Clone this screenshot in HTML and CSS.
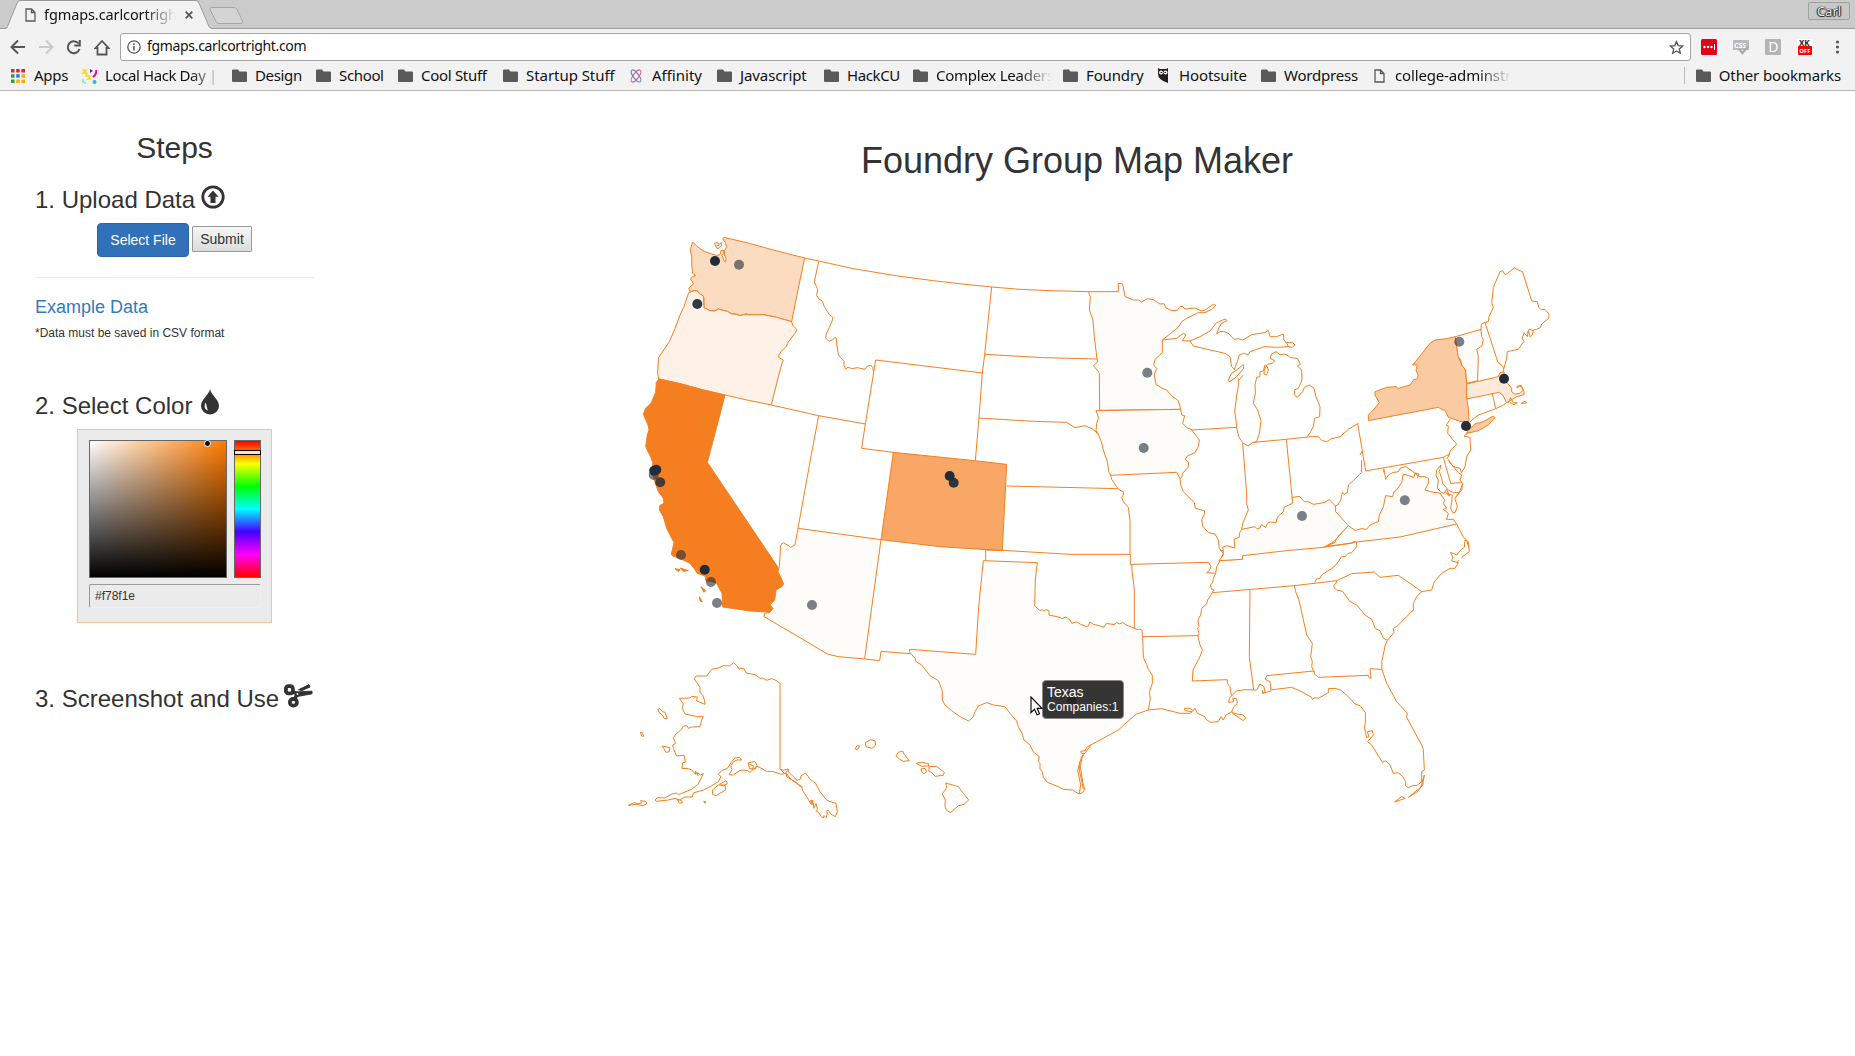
FILE: index.html
```html
<!DOCTYPE html>
<html lang="en">
<head>
<meta charset="utf-8">
<title>fgmaps.carlcortright.com</title>
<link rel="stylesheet" href="styles.css">
</head>
<body>
<svg class="defs" width="0" height="0">
  <symbol id="folder" viewBox="0 0 15 13"><path fill="#5a5a5a" d="M0 1.5Q0 .5 1 .5H6L7.5 2.5H14Q15 2.5 15 3.5V12Q15 13 14 13H1Q0 13 0 12Z"/></symbol>
  <symbol id="page" viewBox="0 0 11 14"><path fill="none" stroke="#5a5a5a" stroke-width="1.3" d="M1 1H6.5L10 4.5V13H1ZM6.5 1V4.5H10"/></symbol>
</svg>
<header class="browser">
  <div class="tabstrip">
    <svg class="tabs" width="260" height="29" viewBox="0 0 260 29">
      <path d="M0 28.5H5.5Q7 28.5 7.500 26.500L17 3Q18 .5 20 .5H196Q198 .5 199 3L209 26.500Q210 28.500 212 28.500H260V29H0Z" fill="#f2f2f2"/>
      <path d="M0 28.500H5Q7 28.500 7.500 26.500L17 3Q18 .5 20 .5H196Q198 .5 199 3L209 26.500Q210 28.500 212 28.500H260" fill="none" stroke="#999"/>
      <path d="M211.500 7.500H234Q236 7.500 237 9.500L242.500 21Q243 23.500 241 23.500H219Q217 23.500 216 21.500L210 9.500Q209.500 7.500 211.500 7.500Z" fill="#d4d4d4" stroke="#a5a5a5"/>
    </svg>
    <div class="tab"><svg class="doc" width="11" height="14"><use href="#page"/></svg><span class="tab-title fade">fgmaps.carlcortrigh</span>
      <svg class="close" width="8" height="8" viewBox="0 0 8 8"><path d="M.7.7 7.300 7.300M7.300.7.7 7.300" stroke="#555" stroke-width="1.7"/></svg></div>
    <span class="user">Carl</span>
  </div>
  <div class="toolbar">
    <svg class="nav" width="94" height="28" viewBox="0 0 94 28" fill="none" stroke="#555" stroke-width="2">
      <path d="M25 14H12M18 7.500 11.500 14 18 20.500"/>
      <path d="M39 14H52M46 7.500 52.500 14 46 20.500" stroke="#ccc"/>
      <path d="M78.500 10.500A6 6 0 1 0 79.500 16M79.800 7V12.500H74.300"/>
    </svg>
    <svg class="home" width="16" height="17" viewBox="0 0 16 17" fill="none" stroke="#555" stroke-width="1.800"><path d="M1.500 9 8 2 14.500 9H12.500V15.500H3.500V9Z"/></svg>
    <div class="omnibox">
      <svg width="14" height="14" viewBox="0 0 14 14" fill="none" stroke="#5a5a5a"><circle cx="7" cy="7" r="6.200" stroke-width="1.300"/><path d="M7 6V10.500M7 3.300V5" stroke-width="1.600"/></svg>
      <span class="url">fgmaps.carlcortright.com</span>
      <svg class="star" width="15" height="15" viewBox="0 0 15 15"><path d="M7.500 1.500 9.200 5.600 13.600 6 10.300 8.900 11.300 13.200 7.500 10.900 3.700 13.200 4.700 8.900 1.400 6 5.800 5.600Z" fill="none" stroke="#555" stroke-width="1.300"/></svg>
    </div>
    <div class="extensions">
      <svg width="16" height="16" viewBox="0 0 16 16"><rect width="16" height="16" rx="1.500" fill="#e2001a"/><g fill="#fff"><circle cx="3.500" cy="8" r="1.200"/><circle cx="7" cy="8" r="1.200"/><circle cx="10.500" cy="8" r="1.200"/><path d="M13 5h1v6h-1z"/></g></svg>
      <svg width="16" height="16" viewBox="0 0 16 16"><path d="M0 1H16V11H0Z" fill="#bbb"/><text x="1" y="8.500" class="css-label">CSS</text><path d="M6 10 9.500 14 15.500 7" fill="none" stroke="#aaa" stroke-width="2.400"/></svg>
      <svg width="16" height="16" viewBox="0 0 16 16"><rect width="16" height="16" rx="1" fill="#b4b4b4"/><text x="3.200" y="13" class="d-label">D</text></svg>
      <svg width="16" height="16" viewBox="0 0 16 16"><path d="M0 0H16V16H0Z" fill="#fff"/><text x="2" y="7" class="xk-label">XK</text><rect x="1" y="7" width="14" height="9" rx="1" fill="#f00"/><text x="2.300" y="14" class="off-label">OFF</text></svg>
      <svg width="16" height="16" viewBox="0 0 16 16" fill="#555"><circle cx="8.500" cy="3" r="1.600"/><circle cx="8.500" cy="8" r="1.600"/><circle cx="8.500" cy="13" r="1.600"/></svg>
    </div>
  </div>
  <nav class="bookmarks">
    <a class="bm b-apps"><svg width="14" height="14" viewBox="0 0 14 14"><path d="M0 0h3.500v3.500H0zM5.200 0h3.500v3.500H5.200zM10.400 0H14v3.500h-3.600z" fill="#e8202e"/><path d="M0 5.200h3.500v3.500H0zM0 10.400h3.500V14H0z" fill="#20a050"/><path d="M5.200 5.200h3.500v3.500H5.200z" fill="#2a7bf0"/><path d="M10.400 5.200H14v3.500h-3.600zM5.200 10.400h3.500V14H5.200zM10.400 10.400H14V14h-3.600z" fill="#fab000"/></svg><span>Apps</span></a>
    <a class="bm b-local"><svg width="16" height="16" viewBox="0 0 16 16" fill="none" stroke-width="2"><path d="M1 2 5 2 2 5 6 5 5 8 9 8 7 11 10 11" stroke="#f8dc20" stroke-width="1.700"/><path d="M9 1 12 3 9 5Z" fill="#6020d0"/><path d="M15 2Q16 6 12 9" stroke="#ee1080"/><path d="M2 11Q1 15 5 15" stroke="#80f0c0"/><circle cx="13.500" cy="14" r="2" fill="#20b8e8"/></svg><span class="fade">Local Hack Day |</span></a>
    <a class="bm b-design"><svg width="15" height="13"><use href="#folder"/></svg><span>Design</span></a>
    <a class="bm b-school"><svg width="15" height="13"><use href="#folder"/></svg><span>School</span></a>
    <a class="bm b-cool"><svg width="15" height="13"><use href="#folder"/></svg><span>Cool Stuff</span></a>
    <a class="bm b-startup"><svg width="15" height="13"><use href="#folder"/></svg><span>Startup Stuff</span></a>
    <a class="bm b-affinity"><svg width="12" height="14" viewBox="0 0 14 14" preserveAspectRatio="none" fill="none" stroke-width="1.200"><ellipse cx="7" cy="7" rx="3" ry="7.600" transform="rotate(42 7 7)" stroke="#d8608c"/><ellipse cx="7" cy="7" rx="3" ry="7.600" transform="rotate(-42 7 7)" stroke="#7080b8"/></svg><span>Affinity</span></a>
    <a class="bm b-js"><svg width="15" height="13"><use href="#folder"/></svg><span>Javascript</span></a>
    <a class="bm b-hackcu"><svg width="15" height="13"><use href="#folder"/></svg><span>HackCU</span></a>
    <a class="bm b-complex"><svg width="15" height="13"><use href="#folder"/></svg><span class="fade">Complex Leaders</span></a>
    <a class="bm b-foundry"><svg width="15" height="13"><use href="#folder"/></svg><span>Foundry</span></a>
    <a class="bm b-hoot"><svg width="12" height="15" viewBox="0 0 12 15"><path d="M1 0 3 1H9L11 0V15Q1 12 1 6Z" fill="#231f20"/><circle cx="4" cy="4.500" r="2" fill="#fff"/><circle cx="8.500" cy="4.500" r="2" fill="#fff"/><circle cx="4.300" cy="4.500" r=".8"/><circle cx="8.200" cy="4.500" r=".8"/></svg><span>Hootsuite</span></a>
    <a class="bm b-word"><svg width="15" height="13"><use href="#folder"/></svg><span>Wordpress</span></a>
    <a class="bm b-college"><svg width="11" height="14"><use href="#page"/></svg><span class="fade">college-adminstr</span></a>
    <a class="bm b-other"><svg width="15" height="13"><use href="#folder"/></svg><span>Other bookmarks</span></a>
  </nav>
</header>
<div class="app">
  <aside class="sidebar">
    <h2>Steps</h2>
    <h3>1. Upload Data <svg class="up-icon" width="24" height="24" viewBox="0 0 24 24"><circle cx="12" cy="12" r="10.200" fill="none" stroke="#333" stroke-width="2.800"/><path d="M12 5.500 17.500 11.700H14.500V18H9.500V11.700H6.500Z" fill="#333"/></svg></h3>
    <div class="controls"><button class="select">Select File</button><button class="submit">Submit</button></div>
    <hr>
    <a class="example">Example Data</a>
    <p class="note">*Data must be saved in CSV format</p>
    <h3 class="color-head">2. Select Color <svg class="drop-icon" width="18" height="26" viewBox="0 0 18 26"><path d="M9 0C10 6 18 10 18 17A9 8.500 0 0 1 0 17C0 10 8 6 9 0Z" fill="#333"/><path d="M4.600 13.500C2.500 18 4 20.500 7 21.500C5.500 19 6 16.500 4.600 13.500Z" fill="#fff"/></svg></h3>
    <div class="picker">
      <div class="picker-row"><div class="shade"><i class="shade-dot"></i></div><div class="hue"><i class="hue-bar"></i></div></div>
      <div class="hex">#f78f1e</div>
    </div>
    <h3 class="shot-head">3. Screenshot and Use <svg class="cut-icon" width="29" height="24" viewBox="0 0 29 24" fill="none" stroke="#333"><rect x="1.900" y="2.200" width="7" height="7.200" rx="2.500" stroke-width="3.800"/><rect x="5.900" y="15" width="7" height="6.700" rx="3.200" stroke-width="3.800"/><path d="M9 8 13 9.500 11 15" stroke-width="3.600"/><path d="M12 8 28 7.200 28 9.800 13 12.500ZM14.500 5.800 25 .6 26 3 18 6.500Z" fill="#333" stroke-width="1"/><circle cx="13.500" cy="10" r=".9" fill="#fff" stroke="none"/></svg></h3>
  </aside>
  <main class="main">
    <h1>Foundry Group Map Maker</h1>
    <div class="map">
      <svg class="states" width="980" height="620" viewBox="600 220 980 620">
        <g transform="translate(620 220) scale(.333333)">
          <path class="wa" d="M218 66 230 78 240 86 255 95 275 102 290 106 300 104 303 92 312 90 311 100 306 106 312 122 316 126 318 115 313 105 314 92 320 80 316 68 308 56 312 52 380 68 460 90 554 114 534 210 515 305 470 292 430 284 385 284 378 281 370 285 360 287 350 283 344 281 335 282 322 274 308 271 295 267 285 273 268 271 252 263 252 235 248 228 240 226 232 222 232 212 215 213 210 214 206 204 214 198 220 192 216 182 212 180 214 172 227 166 218 160 215 135 215 108 211 92 214 78Z"/>
          <path d="M283 70 293 68 297 74 304 68 304 78 293 87 287 78ZM287 78 298 76"/>
          <path class="or" d="M206 218 225 211 235 215 237 220 250 228 252 263 268 271 285 273 295 267 308 271 322 274 335 282 350 283 360 287 370 284 430 284 470 292 515 305 518 316 530 328 528 336 514 354 502 370 500 378 484 394 476 406 477 413 490 420 486 430 475 470 454 555 385 541 315 525 250 510 180 491 117 477 116 477 113 460 115 414 148 365 165 326 180 285 192 260 206 218Z"/>
          <path class="ca" d="M117 477 180 491 250 510 315 525 289 625 262 727 474 1042 474 1055 484 1075 491 1093 485 1100 468 1110 464 1140 450 1150 450 1156 459 1160 457 1170 452 1177 390 1173 308 1161 306 1120 290 1090 275 1085 258 1083 255 1068 232 1060 222 1045 210 1030 185 1018 158 1008 154 1003 162 968 140 925 130 890 118 870 120 856 132 850 130 835 115 815 108 795 100 770 98 728 92 710 77 680 82 645 87 630 84 615 70 583 77 565 93 550 107 517 109 487Z"/>
          <path d="M596 124 583 186 593 208 590 226 597 238 606 242 614 262 628 284 639 292 636 304 628 322 618 344 617 354 627 364 640 358 644 353 649 354 650 372 655 404 661 412 672 424 672 436 677 448 684 441 695 446 712 443 735 448 742 438 752 436 758 442 760 453"/>
          <path d="M554 114 596 123 700 146 833 168 940 182 1035 193 1115 201 1200 208M1115 201 1094 403 1087 459 1077 593 1066 722M767 420 1087 459M767 420 736 612 725 685 820 697M454 555 596 587 736 612M596 587 571 720 534 925"/>
        </g>
        <g transform="translate(620 440) scale(.333333)">
          <path class="ca" d="M165 386 180 389 175 395ZM181 384 205 392 190 394ZM243 440 257 452 252 457ZM238 470 247 486 240 482Z"/>
          <path class="pale" d="M534 265 783 299 734 657 655 650 622 642 540 593 432 530 434 520 450 517 459 505 450 495 464 480 468 450 485 440 491 433 484 415 474 395 478 380 482 315 490 308 504 316 512 322 525 315Z"/>
          <path class="co" d="M820 37 1064 62 1160 73 1147 332 960 320 783 299Z"/>
          <path d="M734 657 779 662 783 634 870 641M1097 330 1097 362"/>
        </g>
        <g transform="translate(610 640) scale(.333333)">
          <path d="M370 68 380 76 388 88 392 85 402 86 408 99 435 104 450 115 458 114 470 121 485 116 498 121 510 130 510 387 520 391 534 387 536 396 550 410 561 421 571 417 573 408 586 399 595 410 598 416 617 430 630 455 648 478 655 483 678 490 682 515 676 530 665 524 655 511 650 512 652 522 648 533 642 527 640 534 634 530 625 516 620 515 622 505 618 490 612 505 608 480 606 495 603 480 603 492 590 470 580 455 575 442 560 430 545 420 528 400 515 403 490 395 470 394 450 383 440 378 430 388 420 397 412 392 400 390 390 391 370 405 357 404 366 390 362 378 370 365 382 360 395 360 388 352 375 354 365 365 352 385 335 392 325 403 333 410 325 425 300 440 280 450 250 459 247 471 225 471 208 480 195 475 175 480 140 484 135 480 142 473 165 474 185 462 200 459 205 464 215 460 245 448 265 432 280 400 272 405 262 398 264 407 256 393 257 403 245 390 235 386 216 385 218 368 226 366 222 346 200 348 190 325 188 315 197 310 190 295 195 285 215 268 220 258 231 257 235 265 245 261 270 260 275 240 280 230 262 230 225 222 217 205 220 192 208 175 240 174 245 169 262 171 260 183 285 193 283 180 278 165 270 158 270 142 253 117 258 108 290 108 305 88 325 84 340 77 358 78Z"/>
          <path d="M143 208 150 206 157 215 165 217 172 235 163 236 157 225 147 217ZM91 277 97 278 101 289 95 288ZM157 318 180 323 178 335 168 337ZM55 496 72 488 85 491 95 489 92 482 108 484 110 492 98 497 80 493ZM307 450 325 435 345 435 347 450 318 467 308 463ZM328 433 348 422 352 430 340 438ZM415 368 435 365 441 376 436 387 418 386ZM418 372 432 379 425 388M281 484 287 485 285 490ZM202 478 215 482 217 489 208 489ZM528 398 530 410 555 425 578 442M510 387 525 402 536 388"/>
          <path d="M735 326 742 316 749 318 742 329ZM766 308 782 299 796 303 796 316 786 325 768 320ZM858 347 865 337 878 333 882 342 898 362 880 364 868 357ZM919 370 935 367 957 372 955 378 935 379ZM933 387 945 385 950 395 943 401 935 396ZM957 379 980 380 1003 397 1000 406 975 409 965 397 957 395ZM1007 429 1045 440 1060 460 1076 480 1062 493 1045 497 1022 518 1010 511 1005 500 1006 480 997 462 1010 443Z"/>
        </g>
        <g transform="translate(960 260) scale(.333333)">
          <path class="pale" d="M385 95 475 95 475 70 488 72 495 110 520 120 535 120 545 126 562 116 580 119 600 132 612 131 618 144 636 152 652 151 660 140 667 139 675 147 705 144 725 153 735 150 760 133 768 136 755 148 735 158 715 158 680 175 665 185 655 202 607 240 607 278 585 298 581 315 590 325 583 345 588 373 605 384 620 390 635 408 655 422 662 448 419 451 418 340 415 334 400 317 413 306 411 297 403 230 399 180 388 150 391 110Z"/>
          <path class="pale" d="M408 452 662 448 665 465 674 467 668 490 680 503 694 508 718 540 715 560 705 578 682 588 676 598 686 607 684 622 668 640 665 652 660 655 650 637 452 646 446 635 442 605 430 570 424 545 415 523 408 512 410 490 415 475 413 465Z"/>
          <path d="M180 88 270 92 385 95M74 283 250 293 411 297M57 474 220 484 320 487 345 503 375 497 400 508 408 517 415 523 402 510M140 678 472 686"/>
          <path d="M607 240 650 235 670 220 678 225 667 242 690 243 700 258 760 272 795 280 810 290 815 320 825 330M805 360 815 340 830 330 850 314 851 325 830 350 808 366ZM835 355 835 380 830 405 824 455 828 480 830 503 836 530 848 548 864 558 880 546M694 510 830 502"/>
          <path d="M690 243 720 230 750 213 770 188 795 177 802 182 785 190 777 203 770 222 780 215 790 214 805 220 822 238 835 236 848 240 875 224 900 220 915 218 925 211 930 230 950 230 970 222 972 240 982 252 985 260M978 248 997 247 1005 255 997 262 985 260 950 262 913 260 885 270 870 275 865 284 850 280 838 285 832 305 823 328M850 345 835 362"/>
          <path d="M880 548 890 545 898 520 903 483 893 450 880 430 886 400 885 375 890 352 900 350 900 335 910 333 915 315 922 320 925 330 920 345 912 342 913 330 922 313 938 310 944 302 930 295 935 282 948 275 960 284 975 282 992 293 1012 295 1021 313 1012 318 1025 330 1026 360 1015 385 1003 390 1003 405 1012 412 1028 395 1033 382 1048 375 1062 385 1068 410 1080 440 1079 470 1064 475 1060 500 1052 515 1042 530M880 547 979 538 1053 530 1075 530 1086 542 1100 545 1112 537 1140 530 1165 508 1195 490M848 550 860 700 860 730 865 750 848 790 845 808M979 538 998 728"/>
          <path d="M452 646 455 658 470 680 478 690 490 695 490 705 485 712 490 725 505 742 510 780 510 883M660 655 662 675 670 695 690 715 703 728 706 745 733 752 734 760 725 780 728 798 745 818 765 822 775 840 778 865 785 873 790 870"/>
        </g>
        <g transform="translate(960 540) scale(.333333)">
          <path class="tx" d="M-152 328 -20 338 47 343 56 200 70 62 232 68 226 120 224 198 240 212 247 208 252 214 258 208 267 213 267 225 300 232 305 236 318 231 330 240 335 250 350 246 362 253 383 261 390 246 400 253 432 261 440 250 462 254 470 248 480 252 488 247 497 254 525 266 535 269 540 267 546 271 548 290 550 352 560 374 565 388 577 406 577 430 568 458 571 475 565 510 530 522 510 538 475 570 430 595 397 612 380 622 376 632 362 634 365 640 372 640 365 650 360 665 353 690 362 735 358 762 345 755 338 750 310 748 295 740 262 727 250 712 247 695 240 688 240 670 235 665 238 650 220 636 210 615 192 600 186 580 175 560 170 543 150 520 135 500 100 495 80 488 55 498 45 515 40 530 26 543 0 530 -25 512 -45 495 -53 480 -53 453 -65 422 -90 407 -115 375 -132 365 -135 355 -150 338Z"/>
          <path d="M395 613 383 628 367 650 361 680 368 725 374 748 368 758 358 762M360 665 358 690 370 748M127 31 330 43 511 43M76 30 128 31M511 43 511 73 515 73 516 90 523 150 523 266M515 73 745 67 753 80 748 92 740 98 767 100M548 290 714 287"/>
          <path d="M785 33 780 28 790 40 782 60 770 80 767 100 760 115 758 128 751 135 754 147 762 150 757 158 743 180 740 192 725 205 722 225 714 240 717 260 713 265 717 280 714 290 720 315 727 330 722 345 712 365 699 390 697 423 802 419 802 430 810 440 812 455 815 467M565 510 605 506 660 520 690 520 697 515 675 512 673 505 690 505 700 512 705 505 712 520 735 530 738 538 752 547 775 545 783 530 790 540 798 525 815 515 818 520 850 542 857 533 848 525 822 520 815 515 822 500 832 490 830 476 818 475 822 485 806 487 808 475 815 467 830 453 855 449 890 450 900 432 912 440 915 455 908 460 908 450M908 460 933 453M870 148 868 350 881 450M1003 137 1007 155 1017 180 1040 285 1050 300 1057 310 1052 350 1057 365 1055 380 1062 396M933 450 930 425 916 418 920 407 1062 393M757 158 1003 137 1130 122M779 61 847 58 848 46"/>
        </g>
        <g transform="translate(1220 460) scale(.333333)">
          <path class="pale" d="M65 208 85 204 105 200 112 207 120 204 124 194 137 202 142 190 150 186 168 188 172 172 190 155 192 142 217 130 217 112 238 109 253 125 265 125 280 133 312 128 328 119 346 138 347 155 370 180 385 197 350 235 342 245 310 262 200 272 68 287 67 298 -3 302 10 285 10 272 8 262 20 257 44 264 44 252 42 238 58 232 58 220Z"/>
          <path class="pale" d="M318 260 345 247 350 235 385 197 405 211 425 206 440 208 450 195 475 185 478 165 490 140 497 107 518 110 522 95 530 90 545 68 550 42 582 52 585 40 600 50 615 50 625 55 625 70 615 90 640 97 660 99 665 108 675 120 670 130 680 145 670 148 685 160 680 178 700 178 710 192 540 231 410 246 350 256Z"/>
          <path d="M425 0 424 38 400 62 385 75 382 98 372 103 367 97 362 120 355 133 346 138M310 262 345 256 395 250 405 244 410 247 410 260 395 278 385 280 375 290 365 290 350 312 340 322 305 345 300 355 290 357 284 367M350 362 348 370 341 375 343 385 350 390 368 394 390 425 410 435 435 465 455 478 466 506 480 512 490 535 500 539 503 540 522 518 520 505 530 500 580 450 580 430 590 410 605 395M350 362 395 341 463 336 480 352 535 346 570 370 605 395 635 390 643 365 665 340 690 325 705 325 715 308 695 303 698 292 692 277 710 285 722 270 733 262 735 240 745 245 748 275 725 292M710 192 730 232 740 240 746 262M718 300 710 308"/>
          <path d="M283 633 283 642 295 652 445 646 447 653 453 655 450 626 486 628M150 690 215 682 245 695 275 712 277 719 282 714 297 714 325 698 325 686 345 685 362 690 385 710 405 732 420 737 436 757 436 790 433 800 440 832 447 830 442 815 457 812 460 825 443 845 455 855 487 907 497 902 510 915 520 940 535 938 548 950 557 965 557 978 565 983 580 976 590 977 605 965 605 935 613 930 610 870 605 855 560 772 562 760 530 725 500 670 486 628 485 605 493 570 494 560 503 540M613 945 608 975 590 997 565 1012 602 982ZM524 1026 545 1010 555 1015Z"/>
          <path d="M492 27 497 58 505 45 518 38 535 35 540 25 557 20 583 38 597 42 592 54M718 98 705 115 712 140 705 158 698 158 692 145 695 128 697 105 680 100M663 15 650 30 648 48 655 60 652 85 665 98 672 100 680 88 688 108 675 95M663 15 658 35 665 55 668 70 685 90 700 98 718 98 726 75"/>
        </g>
        <g transform="translate(1320 250) scale(.333333)">
          <path class="ny" d="M145 512 145 495 160 480 178 458 165 435 165 425 200 412 228 410 235 415 270 405 282 388 290 388 295 378 288 360 292 345 278 345 300 318 330 280 345 270 380 266 406 260 410 290 415 320 425 345 437 360 440 400 440 445 445 475 447 515 420 514 385 502 375 480 368 480 355 472 250 492ZM445 540 465 522 490 515 520 498 525 503 505 525 475 542 442 550Z"/>
          <path class="pale" d="M406 260 483 238 485 260 490 268 486 288 470 298 475 320 473 392 440 400 437 360 425 345 422 330 415 320 410 290Z"/>
          <path class="ma" d="M440 402 535 380 540 368 552 365 553 390 567 405 575 415 575 425 585 432 600 430 610 420 600 408 590 413 592 408 604 407 612 425 612 434 590 440 560 458 548 435 537 427 440 447Z"/>
          <path d="M483 238 484 222 495 217 533 335 550 352 550 366M498 220 498 216 505 215 507 200 520 172 515 158 517 145 520 112 540 65 548 62 555 74 563 70 583 54 608 66 635 153 652 155 656 172 662 178 675 178 687 192 686 205 665 222 662 232 650 238 640 240 637 255 630 260 625 243 622 260 612 248 607 265 612 274 595 298 575 302 562 305 560 325 552 355M640 243 628 237 622 250M517 432 527 476 490 490 475 495 450 515M560 458 550 465 527 476M565 458 572 443 580 458 592 458 582 464 570 458M604 460 615 453 620 459Z"/>
          <path d="M113 520 137 663 370 622 388 612 392 600 410 583 383 550 385 528 379 525 390 508M437 550 445 548 432 558 450 562 452 600 440 620 435 650 425 668 420 655 400 650 382 625 388 612M370 622 392 700 425 698M385 632 415 668 425 675 420 690 428 700 425 720 408 740M127 603 120 615 M190 657 192 668"/>
        </g>
        <g class="dots">
          <circle cx="715" cy="261" r="5" class="full"/><circle cx="739" cy="264.700" r="5"/><circle cx="697.300" cy="304" r="5" class="strong"/>
          <circle cx="653.700" cy="475" r="5"/><circle cx="654.200" cy="470.700" r="5" class="full"/><circle cx="656.300" cy="469.800" r="5" class="full"/><circle cx="660.200" cy="482.300" r="5" class="mid"/>
          <circle cx="681" cy="555" r="5"/><circle cx="704.700" cy="569.700" r="5" class="full"/><circle cx="711" cy="582" r="5"/><circle cx="717" cy="603" r="5"/>
          <circle cx="812" cy="605" r="5"/><circle cx="949.700" cy="476" r="5" class="full"/><circle cx="953.700" cy="482.700" r="5" class="strong"/>
          <circle cx="1147.300" cy="372.800" r="5"/><circle cx="1143.700" cy="448" r="5"/><circle cx="1302" cy="516" r="5"/><circle cx="1404.800" cy="500.200" r="5"/>
          <circle cx="1459.300" cy="341.800" r="5"/><circle cx="1504" cy="378.800" r="5" class="full"/><circle cx="1466" cy="426" r="5" class="full"/><circle cx="1071.700" cy="700.500" r="5"/>
        </g>
      </svg>
      <div class="tip"><div class="tip-name">Texas</div><div class="tip-count">Companies:1</div></div>
      <svg class="cursor" width="14" height="20" viewBox="0 0 14 20"><path d="M1 1V16.500L4.500 13.200 7 18.800 9.500 17.700 7.200 12.300H12Z" fill="#fff" stroke="#111" stroke-width="1.200"/></svg>
    </div>
  </main>
</div>
</body>
</html>
```
FILE: styles.css
```css
* { box-sizing: border-box; }
body { margin: 0; height: 1056px; overflow: hidden; background: #fff; color: #333; font-family: "Liberation Sans", Arial, sans-serif; }
.defs { position: absolute; }
h1, h2, h3, p { margin: 0; font-weight: 400; }

/* browser frame */
.browser { height: 91px; background: #f2f2f2; border-bottom: 1px solid #b6b6b6; font-family: "Noto Sans", sans-serif; color: #111; }
.tabstrip { position: relative; height: 29px; background: #cbcbcb; border-bottom: 1px solid #999; display: flex; justify-content: space-between; }
.tabs { position: absolute; left: 0; top: 0; }
.tab { position: relative; display: flex; align-items: center; height: 29px; padding-left: 25px; }
.doc { margin-right: 8px; }
.tab-title { width: 132px; font-size: 14.500px; line-height: 20px; padding-bottom: 1px; letter-spacing: -.1px; }
.close { margin-left: 9px; }
.fade { overflow: hidden; white-space: nowrap; -webkit-mask-image: linear-gradient(90deg, #000 calc(100% - 32px), transparent); mask-image: linear-gradient(90deg, #000 calc(100% - 32px), transparent); }
.user { margin: 2px 5px 0 0; width: 42px; height: 18px; border: 1px solid #a0a0a0; border-radius: 2px; background: #c8c8c8; color: #eee; font-size: 13px; line-height: 16px; text-align: center; text-shadow: 0 0 1px #222, 1px 0 1px #222, -1px 0 1px #222, 0 1px 1px #222; position: relative; }
.toolbar { display: flex; height: 36px; padding-top: 4px; }
.nav { flex: none; width: 94px; }
.home { flex: none; width: 16px; margin: 6px 9px 0 0; }
.omnibox { width: 1571px; height: 28px; margin-left: 1px; border: 1px solid #a6a6a6; border-radius: 3px; background: #fff; display: flex; align-items: center; padding: 0 6px; }
.url { margin-left: 6px; font-size: 14px; line-height: 20px; padding-bottom: 2px; letter-spacing: -.33px; }
.star { margin-left: auto; }
.extensions { display: flex; gap: 16px; align-items: center; height: 28px; margin-left: 10px; }
.css-label { font: 700 7px "Noto Sans", sans-serif; fill: #fff; }
.d-label { font: 14px "Noto Sans", sans-serif; fill: #fff; }
.xk-label { font: 700 8px "Noto Sans", sans-serif; fill: #222; }
.off-label { font: 700 6px "Noto Sans", sans-serif; fill: #fff; }
.bookmarks { display: flex; height: 24px; align-items: center; padding: 0 0 3px 11px; font-size: 15px; line-height: 22px; }
.bm { display: flex; align-items: center; flex: none; white-space: nowrap; }
.bm svg { flex: none; }
.bm span { margin-left: 8px; padding-bottom: 1px; }
.b-apps { width: 70px; letter-spacing: -.3px; }
.b-apps span { margin-left: 9px; }
.b-local { width: 151px; letter-spacing: -.4px; }
.b-local span { width: 117px; }
.b-design { width: 84px; letter-spacing: -.35px; }
.b-school { width: 82px; letter-spacing: -.35px; }
.b-cool { width: 105px; letter-spacing: -.3px; }
.b-startup { width: 127px; letter-spacing: -.05px; }
.b-affinity { width: 87px; letter-spacing: 0; }
.b-affinity span { margin-left: 10px; }
.b-js { width: 107px; letter-spacing: -.1px; }
.b-hackcu { width: 89px; letter-spacing: -.4px; }
.b-complex { width: 150px; }
.b-complex span { width: 116px; letter-spacing: -.25px; }
.b-foundry { width: 94px; letter-spacing: -.15px; }
.b-hoot { width: 104px; }
.b-hoot span { margin-left: 10px; letter-spacing: -.1px; }
.b-word { width: 113px; letter-spacing: -.2px; }
.b-college span { width: 116px; margin-left: 10px; letter-spacing: -.15px; }
.b-other { margin-left: auto; margin-right: 14px; padding-left: 11px; border-left: 1px solid #bcbcbc; height: 17px; letter-spacing: -.13px; }

/* application */
.app { display: flex; }
.sidebar { width: 314px; padding-left: 35px; flex: none; }
h2 { margin-top: 40px; text-align: center; font-size: 30px; line-height: 33px; }
h3 { display: flex; font-size: 24px; line-height: 26px; height: 26px; margin-top: 23px; white-space: nowrap; }
.up-icon { margin: -2px 0 0 6px; }
.drop-icon { margin: -4px 0 0 9px; }
.cut-icon { margin: -2px 0 0 5px; }
.controls { display: flex; justify-content: center; gap: 3px; margin-top: 10px; height: 34px; }
.controls button { font: 14px "Liberation Sans", Arial, sans-serif; padding: 0; }
.select { width: 92px; height: 34px; color: #fff; background: #3071b9; border: 1px solid #2c65a5; border-radius: 4px; }
.submit { width: 60px; height: 26px; margin-top: 3px; color: #333; background: linear-gradient(#f6f6f6, #dcdcdc); border: 1px solid #999; border-radius: 1px; }
hr { margin: 20px 0 0; border: 0; height: 1px; background: #ececec; }
.example { display: block; margin-top: 16px; font-size: 18px; line-height: 26px; color: #337ac0; }
.note { margin-top: 5px; font-size: 12px; line-height: 17px; }
.color-head { margin-top: 51px; }
.picker { width: 195px; height: 194px; margin: 10px 0 0 42px; padding: 10px; border: 1px solid #f4c391; background: #ebebeb; padding-left: 11px; }
.picker-row { display: flex; gap: 7px; }
.shade { position: relative; width: 138px; height: 138px; border: 1px solid #666; background: linear-gradient(transparent, #000), linear-gradient(90deg, #fff, #ff7a00); }
.shade-dot { position: absolute; left: 114px; top: -1px; width: 7px; height: 7px; border: 1px solid #fff; border-radius: 50%; background: #000; }
.hue { position: relative; width: 27px; height: 138px; border: 1px solid #666; background: linear-gradient(#f00, #ff0, #0f0, #0ff, #40f, #f0f, #f00); }
.hue-bar { position: absolute; left: -1px; top: 9px; width: 27px; height: 5px; border: 1px solid #000; background: #ffdcc3; }
.hex { width: 172px; height: 24px; margin-top: 6px; padding-left: 5px; border: 1px solid #f0f0f0; border-top-color: #999; border-left-color: #999; border-radius: 2px; font-size: 12px; line-height: 22px; }
.shot-head { margin-top: 63px; }
.main { flex: 1; padding: 50px 15px 0 0; }
h1 { text-align: center; font-size: 36px; line-height: 40px; }
.map { position: relative; width: 980px; height: 620px; margin: 39px 0 0 286px; }
.states path { fill: none; stroke: #f4801f; stroke-width: 1; vector-effect: non-scaling-stroke; stroke-linejoin: round; }
.states .wa { fill: #fbdcc0; }
.states .or { fill: #fef1e7; }
.states .ca { fill: #f57f20; }
.states .co { fill: #f8a766; }
.states .ny { fill: #facaa2; }
.states .ma { fill: #feeadb; }
.states .pale { fill: #fdfcf9; }
.states .tx { fill: #fefdfc; }
.dots circle { fill: #222b38; fill-opacity: .6; }
.dots .full { fill-opacity: 1; }
.dots .strong { fill-opacity: .93; }
.dots .mid { fill-opacity: .82; }
.tip { position: absolute; left: 442px; top: 460px; width: 82px; height: 39px; padding: 4px 0 0 4px; border: 1px solid #888; border-radius: 4px; background: rgba(25, 25, 25, .88); color: #fff; white-space: nowrap; }
.tip-name { font-size: 14px; line-height: 15px; }
.tip-count { font-size: 12px; line-height: 14px; letter-spacing: .08px; }
.cursor { position: absolute; left: 430px; top: 476px; }
```
